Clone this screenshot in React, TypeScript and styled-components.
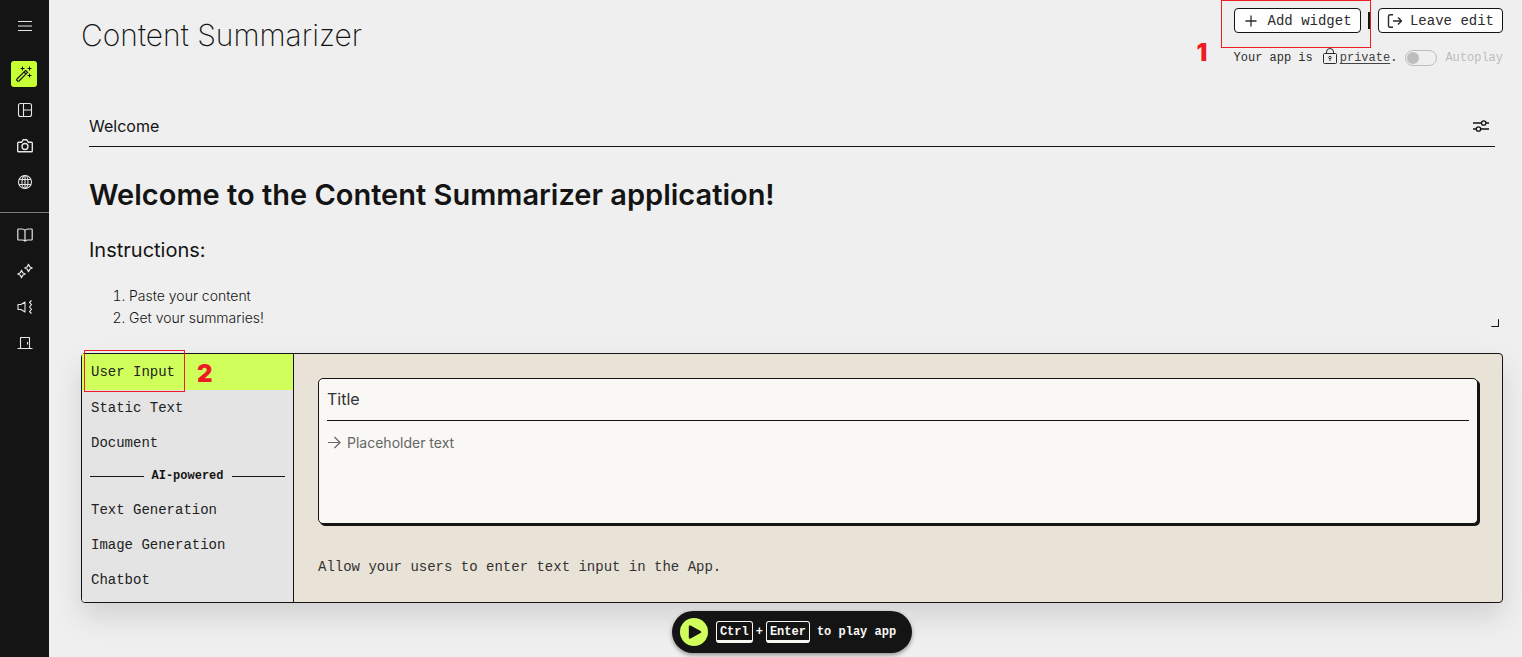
import React from "react";
import styled, { createGlobalStyle, css } from "styled-components";

const ink = "#141414";
const lime = "#d0ff5c";
const red = "#ed1c24";
const sans = `Inter, "Noto Sans", sans-serif`;
const mono = `"Liberation Mono", "DejaVu Sans Mono", monospace`;

const GlobalStyle = createGlobalStyle`
  *, *::before, *::after { box-sizing: border-box; }
  body { margin: 0; background: #efefef; color: ${ink}; font-family: ${sans}; }
  button, input { font: inherit; color: inherit; }
  h1, h2, h3, p, ol, ul { margin: 0; padding: 0; font-weight: inherit; }
  svg { display: block; flex: none; }
`;

const Shell = styled.div`
  display: flex;
  min-height: 100vh;
`;

const Sidebar = styled.nav`
  width: 49px;
  flex: none;
  display: flex;
  flex-direction: column;
  align-items: center;
  padding-top: 8px;
  background: ${ink};
`;

const NavGroup = styled.div<{ $ruled?: boolean }>`
  display: flex;
  flex-direction: column;
  align-items: center;
  align-self: stretch;
  margin-top: 12px;
  ${(p) =>
    p.$ruled &&
    css`
      padding-top: 4px;
      border-top: 1px solid #7a7a7a;
    `}
`;

const NavButton = styled.button<{ $active?: boolean }>`
  width: 26px;
  height: 26px;
  margin: 5px ${(p) => (p.$active ? 1 : 0)}px 5px 0;
  padding: 0;
  display: grid;
  place-items: center;
  border: 0;
  border-radius: 3px;
  background: ${(p) => (p.$active ? "#c6ff33" : "transparent")};
  color: ${(p) => (p.$active ? ink : "#e6e6e6")};
`;

const Main = styled.main`
  flex: 1;
  min-width: 0;
  padding: 8px 19px 4px 32px;
`;

const Header = styled.header`
  display: flex;
  justify-content: space-between;
  align-items: flex-start;
  height: 98px;
`;

const AppTitle = styled.h1`
  font-size: 30px;
  line-height: 54px;
  font-weight: 200;
`;

const Actions = styled.div`
  display: flex;
  flex-direction: column;
  gap: 16px;
`;

const ActionRow = styled.div`
  display: flex;
  align-items: center;
  justify-content: space-between;
`;

const Divider = styled.span`
  width: 2px;
  height: 17px;
  background: ${ink};
`;

const OutlineButton = styled.button<{ $gap: number }>`
  height: 25px;
  padding: 0 8px;
  display: flex;
  align-items: center;
  gap: ${(p) => p.$gap}px;
  border: 1px solid ${ink};
  border-radius: 4px;
  background: #fff;
  font-family: ${mono};
  font-size: 14px;
  line-height: 20px;
  color: #2b2b2b;
  white-space: nowrap;
`;

const Marked = styled.div`
  position: relative;
`;

const Frame = styled.span<{ $inset: string }>`
  position: absolute;
  inset: ${(p) => p.$inset};
  border: 1px solid ${red};
  pointer-events: none;
`;

const Numeral = styled.span<{ $left: number; $top: number }>`
  position: absolute;
  left: ${(p) => p.$left}px;
  top: ${(p) => p.$top}px;
  font-family: ${sans};
  font-weight: 900;
  font-size: 24px;
  line-height: 24px;
  color: ${red};
  pointer-events: none;
`;

const StatusRow = styled.div`
  display: flex;
  align-items: center;
  height: 18px;
  gap: 8px;
  font-family: ${mono};
  font-size: 12px;
  line-height: 16px;
  color: #2b2b2b;
  white-space: nowrap;
`;

const Privacy = styled.span`
  display: flex;
  align-items: center;
  height: 18px;

  svg {
    margin: -4px 2px 0 9px;
  }
`;

const PrivacyLink = styled.a`
  color: #444;
  text-decoration: underline;
  text-underline-offset: 2px;
`;

const SwitchLabel = styled.label`
  display: flex;
  align-items: center;
  gap: 8px;
  color: #bdbdbd;
`;

const Switch = styled.input`
  appearance: none;
  width: 32px;
  height: 16px;
  margin: 0;
  padding: 1px;
  display: flex;
  border: 1px solid #bdbdbd;
  border-radius: 8px;

  &::before {
    content: "";
    width: 12px;
    height: 12px;
    border-radius: 50%;
    background: #bdbdbd;
  }
`;

const Widget = styled.section`
  position: relative;
  height: 217px;
  margin: 0 8px;
  overflow: hidden;
`;

const WidgetHeader = styled.div`
  display: flex;
  align-items: center;
  justify-content: space-between;
  height: 41px;
  padding-right: 6px;
  border-bottom: 1px solid ${ink};
  font-size: 16px;
  line-height: 20px;
`;

const IconButton = styled.button`
  padding: 0;
  border: 0;
  background: none;
`;

const Headline = styled.h1`
  margin-top: 31px;
  font-size: 29px;
  line-height: 34px;
  font-weight: 600;
`;

const Subhead = styled.h2`
  margin-top: 25px;
  font-size: 20px;
  line-height: 26px;
`;

const Steps = styled.ol`
  margin-top: 22px;
  padding-left: 40px;
  font-size: 14px;
  line-height: 22px;
  font-weight: 300;
`;

const ResizeRow = styled.div`
  height: 30px;
  display: flex;
  justify-content: flex-end;
  margin-top: -4px;
  padding-right: 4px;
`;

const ResizeCorner = styled.span`
  width: 8px;
  height: 8px;
  border: solid ${ink};
  border-width: 0 1px 1px 0;
  border-radius: 1px;
`;

const Picker = styled.section`
  display: flex;
  position: relative;
  height: 250px;
  margin-top: 4px;
  border: 1px solid ${ink};
  border-radius: 4px;
  background: #e9e2d6;
  box-shadow: 0 14px 28px rgba(0, 0, 0, 0.12);
`;

const TypeList = styled.div`
  width: 212px;
  flex: none;
  border-right: 1px solid ${ink};
  border-radius: 3px 0 0 3px;
  background: #e4e4e4;
`;

const TypeButton = styled.button<{ $active?: boolean }>`
  display: block;
  width: 100%;
  height: ${(p) => (p.$active ? 36 : 35)}px;
  padding: 0 9px;
  border: 0;
  background: ${(p) => (p.$active ? lime : "transparent")};
  font-family: ${mono};
  font-size: 14px;
  line-height: 34px;
  color: #222;
  text-align: left;
`;

const ListLabel = styled.h3`
  display: flex;
  align-items: center;
  gap: 8px;
  height: 32px;
  padding: 0 8px;
  font-family: ${mono};
  font-size: 12px;
  font-weight: 700;

  &::before,
  &::after {
    content: "";
    flex: 1;
    height: 1px;
    background: ${ink};
  }
`;

const Preview = styled.div`
  flex: 1;
  min-width: 0;
  padding: 24px;
`;

const PreviewCard = styled.div`
  height: 146px;
  padding: 0 8px;
  border: 1px solid ${ink};
  border-radius: 5px;
  background: #f9f8f4;
  box-shadow: 2px 2px 0 ${ink};
`;

const CardTitle = styled.label`
  display: block;
  height: 42px;
  border-bottom: 1px solid ${ink};
  font-size: 16px;
  line-height: 40px;
  color: #333;
`;

const CardField = styled.div`
  display: flex;
  align-items: center;
  gap: 5px;
  height: 42px;
  color: #666;
`;

const CardInput = styled.input`
  flex: 1;
  min-width: 0;
  padding: 0;
  border: 0;
  background: none;
  font-size: 14px;

  &::placeholder {
    color: #666;
    opacity: 1;
  }
`;

const Description = styled.p`
  margin-top: 32px;
  font-family: ${mono};
  font-size: 14px;
  line-height: 22px;
  color: #333;
`;

const PlayBar = styled.div`
  display: flex;
  justify-content: center;
  position: relative;
  margin-top: 8px;
`;

const PlayButton = styled.button`
  display: flex;
  align-items: center;
  height: 42px;
  padding: 0 16px 0 8px;
  border: 0;
  border-radius: 21px;
  background: ${ink};
  box-shadow: 0 2px 4px rgba(0, 0, 0, 0.4);
  color: #f9f8f4;
  font-family: ${mono};
  font-size: 12px;
  font-weight: 700;
`;

const KeyCombo = styled.span`
  display: flex;
  align-items: center;
  gap: 3px;
  margin: 0 7px 0 8px;
`;

const Key = styled.kbd`
  height: 22px;
  padding: 0 3px;
  border: 1px solid #f9f8f4;
  border-bottom-width: 3px;
  border-radius: 3px;
  font: inherit;
  line-height: 20px;
`;

type GlyphProps = { children: React.ReactNode; size?: number; stroke?: number };

const Glyph = ({ children, size = 16, stroke = 1 }: GlyphProps) => (
  <svg
    width={size}
    height={size}
    viewBox={`0 0 ${size} ${size}`}
    fill="none"
    stroke="currentColor"
    strokeWidth={stroke}
    strokeLinejoin="round"
    aria-hidden="true"
  >
    {children}
  </svg>
);

const MenuIcon = () => (
  <Glyph stroke={1.2}>
    <path d="M1 3.5h14M1 8h14M1 12.5h14" />
  </Glyph>
);

const WandIcon = () => (
  <Glyph>
    <path d="M1 13l8.6-8.6 2 2L3 15c-1.2.8-2.8-.8-2-2zM8 6l2 2" strokeWidth="1.2" />
    <path d="M6.5.5v4M4.500 2.500h4M13.500.5v4M11.500 2.500h4M13.500 7.500v4M11.500 9.500h4" />
  </Glyph>
);

const LayoutIcon = () => (
  <Glyph stroke={1.1}>
    <rect x="1.500" y="1.500" width="13" height="13" rx="2" />
    <path d="M6.500 1.500v13M6.500 8h8" />
  </Glyph>
);

const CameraIcon = () => (
  <Glyph stroke={1.4}>
    <path d="M1.500 4.300h3l1.700-2.500h3.600l1.700 2.500h3q.8 0 .8.8v7.900q0 .8-.8.8h-13q-.8 0-.8-.8V5.100q0-.8.8-.8z" />
    <circle cx="8" cy="8.500" r="3" />
  </Glyph>
);

const GlobeIcon = () => (
  <Glyph stroke={1.1}>
    <circle cx="8" cy="8" r="6.500" />
    <ellipse cx="8" cy="8" rx="3" ry="6.500" />
    <path d="M8 1.500v13M2.200 5.500h11.600M2.200 10.500h11.600" />
  </Glyph>
);

const BookIcon = () => (
  <Glyph stroke={1.2}>
    <path d="M8 3.300Q7 2 5 2H1.600Q.8 2 .8 2.800v9.400q0 .8.800.8H5q2 0 3 1.200 1-1.200 3-1.200h3.400q.8 0 .8-.8V2.800q0-.8-.8-.8H11Q9 2 8 3.300zM8 3.300v10.900" />
  </Glyph>
);

const SparklesIcon = () => (
  <Glyph stroke={1.2}>
    <path d="M11.500 1.300l1.200 2.500 2.500 1.200-2.500 1.200-1.200 2.500-1.200-2.500L7.800 5l2.500-1.200z" />
    <path d="M4.500 7.300l1.200 2.500L8.200 11l-2.500 1.200-1.200 2.500-1.200-2.500L.8 11l2.500-1.200z" />
  </Glyph>
);

const SpeakerIcon = () => (
  <Glyph stroke={1.1}>
    <path d="M1 5.500h3L8 3v10L4 10.500H1z" />
    <path d="M14.500 1.500l-2 2 2 2.200-2 2.300 2 2.300-2 2.200 2 2" />
  </Glyph>
);

const DoorIcon = () => (
  <Glyph stroke={1.1}>
    <path d="M3.500 13.500v-11h9v11M.500 13.500h15M10.500 7v2.500" />
  </Glyph>
);

const PlusIcon = () => (
  <Glyph stroke={1.300}>
    <path d="M8 2.500v11M2.500 8h11" />
  </Glyph>
);

const LeaveIcon = () => (
  <Glyph stroke={1.400}>
    <path d="M6 1.800H3Q1.500 1.800 1.500 3.300v9.400q0 1.500 1.500 1.500H6M6 8h8.500M11 4.500L14.500 8 11 11.500" />
  </Glyph>
);

const LockIcon = () => (
  <Glyph>
    <rect x="1.500" y="5.500" width="13" height="10" rx="1" />
    <path d="M4.500 5.500V4a3.500 3.500 0 0 1 7 0v1.500" />
    <circle cx="8" cy="9.500" r="1.200" />
    <path d="M8 10.500v2.500" />
  </Glyph>
);

const SlidersIcon = () => (
  <Glyph stroke={1.300}>
    <path d="M0 5h8.500M13 5h3M0 11h3.300M7.800 11H16" />
    <circle cx="10.700" cy="5" r="2.200" />
    <circle cx="5.500" cy="11" r="2.200" />
  </Glyph>
);

const ArrowIcon = () => (
  <Glyph size={15} stroke={1.200}>
    <path d="M1 7.500h12M7.500 2l5.500 5.500L7.500 13" />
  </Glyph>
);

const PlayIcon = () => (
  <svg width="28" height="28" viewBox="0 0 28 28" aria-hidden="true">
    <circle cx="14" cy="14" r="14" fill={lime} />
    <path d="M10 8.500v11l10-5.500z" fill={ink} stroke={ink} strokeWidth="2.400" strokeLinejoin="round" />
  </svg>
);

const tools = [
  { label: "Builder", icon: <WandIcon />, active: true },
  { label: "Layout", icon: <LayoutIcon /> },
  { label: "Snapshots", icon: <CameraIcon /> },
  { label: "Publish", icon: <GlobeIcon /> },
];

const links = [
  { label: "Docs", icon: <BookIcon /> },
  { label: "Explore", icon: <SparklesIcon /> },
  { label: "News", icon: <SpeakerIcon /> },
  { label: "Log out", icon: <DoorIcon /> },
];

export default function App() {
  return (
    <>
      <GlobalStyle />
      <Shell>
        <Sidebar>
          <NavButton aria-label="Menu">
            <MenuIcon />
          </NavButton>
          <NavGroup>
            {tools.map((t) => (
              <NavButton key={t.label} aria-label={t.label} $active={t.active}>
                {t.icon}
              </NavButton>
            ))}
          </NavGroup>
          <NavGroup $ruled>
            {links.map((l) => (
              <NavButton key={l.label} aria-label={l.label}>
                {l.icon}
              </NavButton>
            ))}
          </NavGroup>
        </Sidebar>

        <Main>
          <Header>
            <AppTitle>Content Summarizer</AppTitle>
            <Actions>
              <ActionRow>
                <Marked>
                  <OutlineButton $gap={9}>
                    <PlusIcon />
                    Add widget
                  </OutlineButton>
                  <Frame $inset="-8px -10px -15px -13px" />
                  <Numeral $left={-37} $top={33}>1</Numeral>
                </Marked>
                <Divider />
                <OutlineButton $gap={7}>
                  <LeaveIcon />
                  Leave edit
                </OutlineButton>
              </ActionRow>
              <StatusRow>
                <Privacy>
                  Your app is
                  <LockIcon />
                  <PrivacyLink href="#privacy">private</PrivacyLink>.
                </Privacy>
                <SwitchLabel>
                  <Switch type="checkbox" role="switch" />
                  Autoplay
                </SwitchLabel>
              </StatusRow>
            </Actions>
          </Header>

          <Widget>
            <WidgetHeader>
              <span>Welcome</span>
              <IconButton aria-label="Widget settings">
                <SlidersIcon />
              </IconButton>
            </WidgetHeader>
            <Headline>Welcome to the Content Summarizer application!</Headline>
            <Subhead>Instructions:</Subhead>
            <Steps>
              <li>Paste your content</li>
              <li>Get your summaries!</li>
            </Steps>
          </Widget>
          <ResizeRow>
            <ResizeCorner />
          </ResizeRow>

          <Picker>
            <TypeList>
              <Marked>
                <TypeButton $active>User Input</TypeButton>
                <Frame $inset="-4px 108px -2px 2px" />
                <Numeral $left={115} $top={8}>2</Numeral>
              </Marked>
              <TypeButton>Static Text</TypeButton>
              <TypeButton>Document</TypeButton>
              <ListLabel>AI-powered</ListLabel>
              <TypeButton>Text Generation</TypeButton>
              <TypeButton>Image Generation</TypeButton>
              <TypeButton>Chatbot</TypeButton>
            </TypeList>
            <Preview>
              <PreviewCard>
                <CardTitle htmlFor="preview-input">Title</CardTitle>
                <CardField>
                  <ArrowIcon />
                  <CardInput id="preview-input" placeholder="Placeholder text" />
                </CardField>
              </PreviewCard>
              <Description>Allow your users to enter text input in the App.</Description>
            </Preview>
          </Picker>

          <PlayBar>
            <PlayButton>
              <PlayIcon />
              <KeyCombo>
                <Key>Ctrl</Key>+<Key>Enter</Key>
              </KeyCombo>
              to play app
            </PlayButton>
          </PlayBar>
        </Main>
      </Shell>
    </>
  );
}
